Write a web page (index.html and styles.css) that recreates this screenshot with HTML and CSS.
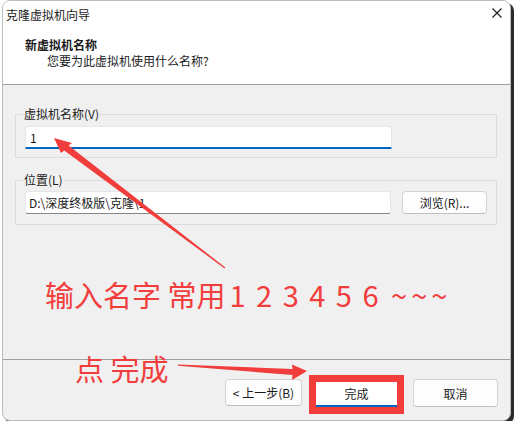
FILE: index.html
```html
<!DOCTYPE html>
<html lang="zh-CN">
<head>
  <meta charset="UTF-8" />
  <title>克隆虚拟机向导</title>
  <link rel="stylesheet" href="styles.css">
</head>
<body>

  <div class="dialog">
    <div class="titlebar">
      <span class="title">克隆虚拟机向导</span>
      <svg class="close" width="10" height="10" viewBox="0 0 10 10">
        <path d="M0.5 0.5 L9.5 9.5 M9.5 0.5 L0.5 9.5" stroke="#1b1b1b" stroke-width="1.1" fill="none" />
      </svg>
    </div>

    <div class="header">
      <div class="heading">新虚拟机名称</div>
      <div class="sub">您要为此虚拟机使用什么名称?</div>
    </div>

    <div class="body">
      <fieldset class="group">
        <legend>虚拟机名称(V)</legend>
        <input type="text" class="field focused" value="1" />
      </fieldset>

      <fieldset class="group group-loc">
        <legend>位置(L)</legend>
        <div class="row">
          <input type="text" class="field" value="D:\深度终极版\克隆\1" />
          <button class="btn browse">浏览(R)...</button>
        </div>
      </fieldset>

      <div class="note">输入名字 常用<span class="digits">1 2 3 4 5 6 </span><span class="tilde">~~~</span></div>
    </div>

    <div class="footer">
      <button class="btn back">&lt; 上一步(B)</button>
      <span class="mark"><button class="btn finish">完成</button></span>
      <button class="btn cancel">取消</button>
    </div>

    <div class="note note-finish">点 完成</div>

    <!-- red arrows drawn over the dialog -->
    <svg class="arrows" width="514" height="424" viewBox="0 0 514 424">
      <polygon fill="#f23d3d" points="54,138 72,143 68.6,145.6 225.4,267.6 224.6,268.4 64.2,150.6 61,153" />
      <polygon fill="#f23d3d" points="307,371 292,364.5 292.5,369 178,364.6 178,365.8 292.5,375 292,380" />
    </svg>
  </div>

</body>
</html>
```

FILE: styles.css
```css
body {
  margin: 0;
  background: #fff;
  font-family: "Noto Sans CJK SC", "Noto Sans", sans-serif;
  font-size: 12px;
  color: #1a1a1a;
}

.dialog {
  position: relative;
  box-sizing: border-box;
  width: 509px;
  height: 421px;
  margin-left: 2px;
  border: 1px solid #bcbcbc;
  border-radius: 8px;
  overflow: hidden;
  background: #f0f0f0;
  box-shadow: 3px 3px 0 #2b2b2b;
}

.titlebar {
  display: flex;
  align-items: center;
  justify-content: space-between;
  height: 27px;
  padding: 0 8px 0 3px;
  background: #fff;
  line-height: 16px;
}

.close {
  margin-top: -3px;
}

.header {
  height: 47px;
  padding: 9px 0 0 22px;
  background: #fff;
  border-bottom: 1px solid #a0a0a0;
  line-height: 16px;
}

.heading {
  font-weight: bold;
}

.sub {
  padding-left: 22px;
}

.body {
  height: 253px;
  padding: 21px 0 0 12px;
}

.group {
  box-sizing: border-box;
  width: 482px;
  margin: 0;
  padding: 4px 0 8px 9px;
  border: 1px solid #dcdcdc;
}

.group legend {
  margin-left: -2px;
  padding: 0 1px;
  line-height: 16px;
}

.group-loc {
  margin-top: 14px;
  padding: 3px 0 10px 9px;
}

.row {
  display: flex;
}

.field {
  box-sizing: border-box;
  width: 366px;
  height: 23px;
  margin: 0;
  padding: 0 3px;
  border: 1px solid #e6e6e6;
  border-bottom: 1px solid #868686;
  border-radius: 3px;
  background: #fff;
  font: inherit;
  color: #1a1a1a;
  outline: none;
}

.field.focused {
  width: 367px;
  padding-left: 4px;
  border-bottom: 2px solid #0067c0;
  border-radius: 3px 3px 0 0;
}

.btn {
  box-sizing: border-box;
  height: 27px;
  margin: 0;
  padding: 0;
  border: 1px solid #d3d3d3;
  border-bottom-color: #c0c0c0;
  border-radius: 4px;
  background: #fdfdfd;
  font: inherit;
  color: #1a1a1a;
}

.browse {
  width: 85px;
  height: 23px;
  margin-left: 11px;
}

.note {
  margin: 51px 0 0 30px;
  color: #f23d3d;
  font-size: 29px;
  line-height: 36px;
  white-space: pre;
}

.note .digits {
  margin-left: 4px;
  word-spacing: 4px;
}

.note .tilde {
  margin-left: 2px;
  letter-spacing: 4px;
}

.note-finish {
  position: absolute;
  left: 72px;
  top: 349px;
  margin: 0;
}

.footer {
  display: flex;
  justify-content: flex-end;
  align-items: flex-start;
  height: 45px;
  padding: 15px 12px 0 0;
  border-top: 1px solid #a0a0a0;
}

.back {
  width: 77px;
  margin-top: 4px;
}

.mark {
  display: flex;
  margin-left: 7px;
  border: 7px solid #f23d3d;
}

.finish {
  width: 81px;
  height: 25px;
  border: none;
  border-bottom: 2px solid #0067c0;
  border-radius: 0;
  background: #fff;
}

.cancel {
  width: 85px;
  height: 28px;
  margin: 4px 0 0 9px;
}

.arrows {
  position: absolute;
  left: -3px;
  top: -1px;
  pointer-events: none;
}
```
